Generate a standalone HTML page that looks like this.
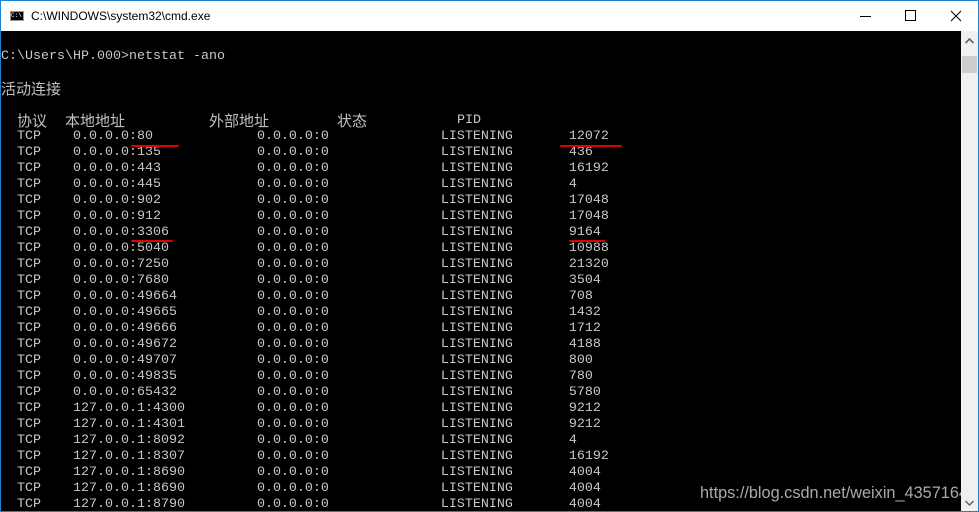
<!DOCTYPE html>
<html><head><meta charset="utf-8"><style>
html,body{margin:0;padding:0;width:979px;height:512px;overflow:hidden;background:#fff}
.win{position:absolute;left:0;top:0;width:977px;height:510px;border:1px solid #1883d7;background:#fff}
.title{position:absolute;left:0;top:0;width:977px;height:30px;background:#fff;font-family:"Liberation Sans",sans-serif;font-size:12px;color:#000}
.con{position:absolute;left:0;top:30px;width:960px;height:480px;background:#000;overflow:hidden}
.sb{position:absolute;left:960px;top:30px;width:17px;height:480px;background:#f0f0f0}
.l{position:absolute;left:0;white-space:pre;font-family:"Liberation Mono","Noto Sans CJK SC",monospace;font-size:13.33px;line-height:16px;color:#c8c8c8}
.c{position:absolute;font-family:"Noto Sans CJK SC","WenQuanYi Zen Hei",sans-serif;font-size:15px;line-height:16px;color:#c0c0c0;white-space:pre}
.r{position:absolute;height:2px;background:#e00000;border-radius:1px}
</style></head><body>
<div class="win">
<div class="title">
<div style="position:absolute;left:9px;top:10px;width:14px;height:10px;background:#000;border:1px solid #999;box-sizing:border-box;color:#fff;font-size:6px;line-height:8px;font-family:'Liberation Mono',monospace">C:\</div>
<div style="position:absolute;left:30px;top:8px">C:\WINDOWS\system32\cmd.exe</div>
<div style="position:absolute;left:859px;top:15px;width:11px;height:1px;background:#000"></div>
<div style="position:absolute;left:904px;top:9px;width:9px;height:9px;border:1px solid #000"></div>
<svg style="position:absolute;left:949px;top:9px" width="12" height="12"><path d="M1 1L11 11M11 1L1 11" stroke="#000" stroke-width="1"/></svg>
</div>
<div class="con">
<div class="l" style="top:18px">C:\Users\HP.000&gt;netstat -ano</div>
<div class="c" style="top:50px;left:0">活动连接</div>
<div class="c" style="top:82px;left:16px">协议</div>
<div class="c" style="top:82px;left:64px">本地地址</div>
<div class="c" style="top:82px;left:208px">外部地址</div>
<div class="c" style="top:82px;left:336px">状态</div>
<div class="l" style="top:82px;left:456px">PID</div>
<div class="l" style="top:98px">  TCP    0.0.0.0:80             0.0.0.0:0              LISTENING       12072
  TCP    0.0.0.0:135            0.0.0.0:0              LISTENING       436
  TCP    0.0.0.0:443            0.0.0.0:0              LISTENING       16192
  TCP    0.0.0.0:445            0.0.0.0:0              LISTENING       4
  TCP    0.0.0.0:902            0.0.0.0:0              LISTENING       17048
  TCP    0.0.0.0:912            0.0.0.0:0              LISTENING       17048
  TCP    0.0.0.0:3306           0.0.0.0:0              LISTENING       9164
  TCP    0.0.0.0:5040           0.0.0.0:0              LISTENING       10988
  TCP    0.0.0.0:7250           0.0.0.0:0              LISTENING       21320
  TCP    0.0.0.0:7680           0.0.0.0:0              LISTENING       3504
  TCP    0.0.0.0:49664          0.0.0.0:0              LISTENING       708
  TCP    0.0.0.0:49665          0.0.0.0:0              LISTENING       1432
  TCP    0.0.0.0:49666          0.0.0.0:0              LISTENING       1712
  TCP    0.0.0.0:49672          0.0.0.0:0              LISTENING       4188
  TCP    0.0.0.0:49707          0.0.0.0:0              LISTENING       800
  TCP    0.0.0.0:49835          0.0.0.0:0              LISTENING       780
  TCP    0.0.0.0:65432          0.0.0.0:0              LISTENING       5780
  TCP    127.0.0.1:4300         0.0.0.0:0              LISTENING       9212
  TCP    127.0.0.1:4301         0.0.0.0:0              LISTENING       9212
  TCP    127.0.0.1:8092         0.0.0.0:0              LISTENING       4
  TCP    127.0.0.1:8307         0.0.0.0:0              LISTENING       16192
  TCP    127.0.0.1:8690         0.0.0.0:0              LISTENING       4004
  TCP    127.0.0.1:8690         0.0.0.0:0              LISTENING       4004
  TCP    127.0.0.1:8790         0.0.0.0:0              LISTENING       4004</div>
<div class="r" style="left:130px;top:114px;width:48px"></div>
<div class="r" style="left:559px;top:114px;width:62px"></div>
<div class="r" style="left:130px;top:209px;width:42px"></div>
<div class="r" style="left:568px;top:209px;width:36px"></div>
<div style="position:absolute;left:699px;top:453px;font-family:'Liberation Sans',sans-serif;font-size:16.3px;color:#aaa;white-space:pre">https://blog.csdn.net/weixin_43571641</div>
</div>
<div class="sb">
<svg style="position:absolute;left:4px;top:7px" width="9" height="6"><path d="M0.5 5L4.5 1L8.5 5" stroke="#606060" stroke-width="1.6" fill="none"/></svg>
<div style="position:absolute;left:1px;top:25px;width:15px;height:17px;background:#cdcdcd"></div>
<svg style="position:absolute;left:4px;top:469px" width="9" height="6"><path d="M0.5 1L4.5 5L8.5 1" stroke="#606060" stroke-width="1.4" fill="none"/></svg>
</div>
</div>
</body></html>
